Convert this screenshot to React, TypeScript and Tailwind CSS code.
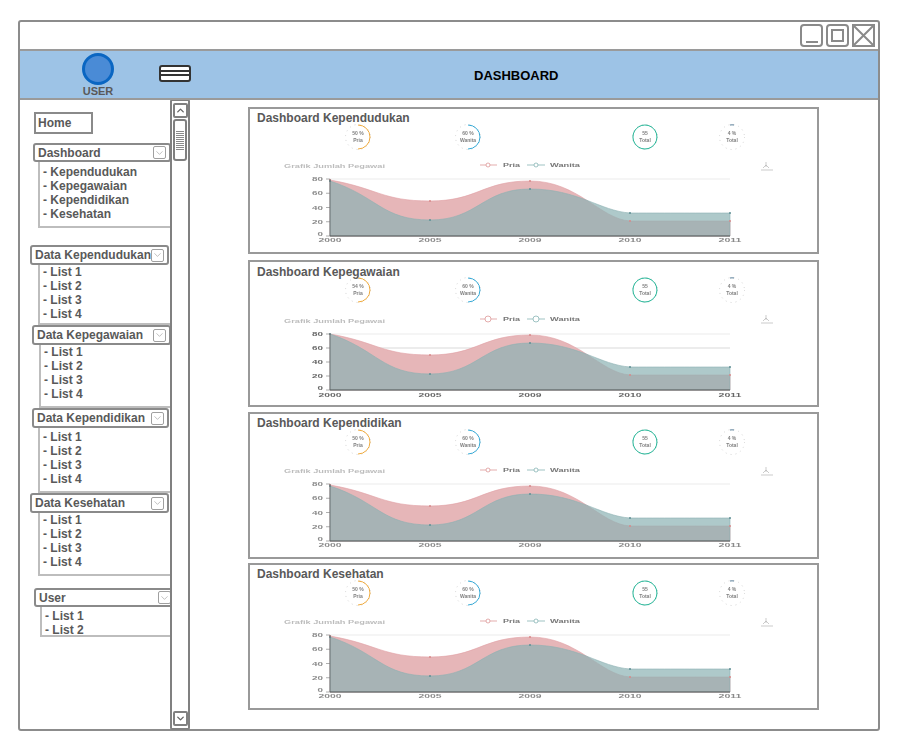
import React from 'react';
import { ChevronDown, ChevronUp } from 'lucide-react';

type Group = {
  title: string;
  items: string[];
  wrap: string;
  header: string;
  list: string;
};

const listItems = ['- List 1', '- List 2', '- List 3', '- List 4'];

const groups: Group[] = [
  {
    title: 'Dashboard',
    items: ['- Kependudukan', '- Kepegawaian', '- Kependidikan', '- Kesehatan'],
    wrap: 'mt-[9px] ml-[13px] w-[138px]',
    header: 'h-[19px]',
    list: 'ml-[5px] h-[66px] pt-[3px] pl-[3px]',
  },
  {
    title: 'Data Kependudukan',
    items: listItems,
    wrap: 'mt-[17px] ml-[10px] w-[139px]',
    header: 'h-[20px]',
    list: 'ml-[8px] -mr-[2px] h-[60px] pl-[3px]',
  },
  {
    title: 'Data Kepegawaian',
    items: listItems,
    wrap: 'ml-[12px] w-[139px]',
    header: 'h-[20px]',
    list: 'ml-[7px] h-[63px] pl-[3px]',
  },
  {
    title: 'Data Kependidikan',
    items: listItems,
    wrap: 'ml-[12px] w-[137px]',
    header: 'h-[20px]',
    list: 'ml-[6px] -mr-[2px] h-[65px] pt-[2px] pl-[3px]',
  },
  {
    title: 'Data Kesehatan',
    items: listItems,
    wrap: 'ml-[10px] w-[139px]',
    header: 'h-[20px]',
    list: 'ml-[8px] -mr-[2px] h-[63px] pl-[3px]',
  },
  {
    title: 'User',
    items: ['- List 1', '- List 2'],
    wrap: 'mt-[12px] ml-[14px] w-[142px]',
    header: 'h-[19px]',
    list: 'ml-[6px] h-[30px] pt-[2px] pl-[3px]',
  },
];

const SideGroup = ({ group }: { group: Group }) => (
  <div className={group.wrap}>
    <div
      className={`flex items-center justify-between rounded-[3px] border-2 border-[#8a8a8a] bg-white pl-[3px] pr-[3px] ${group.header}`}
    >
      <span>{group.title}</span>
      <span className="flex h-[13px] w-[13px] items-center justify-center rounded-[2px] border border-[#a0a0a0]">
        <ChevronDown size={12} strokeWidth={1} color="#777" />
      </span>
    </div>
    <div className={`border-b-2 border-l-2 border-[#bdbdbd] leading-[14px] ${group.list}`}>
      {group.items.map((item) => (
        <div key={item}>{item}</div>
      ))}
    </div>
  </div>
);

const xs = [82, 182, 282, 382, 482];

const curve = (ys: number[]) => {
  let d = `M${xs[0]} ${ys[0]}`;
  for (let i = 1; i < xs.length; i++) {
    // first segment leaves the axis on a slope, the rest flatten at the data points
    const c1y = i === 1 ? ys[0] + (ys[1] - ys[0]) * 0.4 : ys[i - 1];
    const c2x = i === 3 ? xs[i] - 30 : xs[i] - 48;
    const c2y = i === 3 ? ys[i] - 2 : ys[i];
    d += ` C${xs[i - 1] + 48} ${c1y} ${c2x} ${c2y} ${xs[i]} ${ys[i]}`;
  }
  return d;
};

const Gauge = ({
  cx,
  cy,
  color,
  arc,
  top,
  bottom,
}: {
  cx: number;
  cy: number;
  color: string;
  arc: string;
  top: string;
  bottom: string;
}) => (
  <g>
    <circle cx={cx} cy={cy} r="12.5" fill="none" stroke="#c9c9c9" strokeWidth="0.8" strokeDasharray="1 4" />
    <path d={arc} transform={`translate(${cx} ${cy})`} fill="none" stroke={color} strokeWidth="1" />
    <text x={cx} y={cy - 2} textAnchor="middle" fontSize="5" fill="#808080">
      {top}
    </text>
    <text x={cx} y={cy + 5} textAnchor="middle" fontSize="5" fill="#808080">
      {bottom}
    </text>
  </g>
);

const halfArc = 'M0 -12 A12 12 0 0 1 0 12';
const fullArc = 'M0 -12 A12 12 0 1 1 -0.1 -12';
const tinyArc = 'M-2 -12 A12 12 0 0 1 2 -12';

const Chart = ({ sharp = false }: { sharp?: boolean }) => {
  const top = sharp ? 73 : 71;
  const bottom = sharp ? 129 : 128;
  const pink = sharp ? [73, 94, 74, 114, 114] : [72, 93, 73, 113, 113];
  const teal = sharp ? [73, 113, 82, 106, 106] : [73, 112, 81, 105, 105];
  const step = (bottom - top) / 4;
  const labels = ['80', '60', '40', '20', '0'];
  const years = ['2000', '2005', '2009', '2010', '2011'];
  const small = sharp ? 6 : 4.5;
  const ink = sharp ? '#666' : '#8a8a8a';

  return (
    <svg
      viewBox="2 16 567 126"
      width="567"
      height="126"
      className="block overflow-visible blur-[0.4px]"
      fontFamily="'Liberation Sans', sans-serif"
    >
      <Gauge cx={110} cy={29} color="#efaa3d" arc={halfArc} top={sharp ? '54 %' : '50 %'} bottom="Pria" />
      <Gauge cx={220} cy={29} color="#35a9d6" arc={halfArc} top="60 %" bottom="Wanita" />
      <Gauge cx={397} cy={29} color="#1fb394" arc={fullArc} top="55" bottom="Total" />
      <Gauge cx={484} cy={29} color="#5a7f99" arc={tinyArc} top="4 %" bottom="Total" />

      <text x={36} y={sharp ? 62 : 60} fontSize={small} fill="#bdbdbd" textLength={101} lengthAdjust="spacingAndGlyphs">
        Grafik Jumlah Pegawai
      </text>

      <line x1="232" y1={sharp ? 58 : 57} x2="249" y2={sharp ? 58 : 57} stroke="#d98a8a" strokeWidth="0.7" />
      <circle cx="240" cy={sharp ? 58 : 57} r={sharp ? 3 : 2} fill="white" stroke="#d98a8a" strokeWidth="0.7" />
      <text x={255} y={sharp ? 60 : 59} fontSize={small} fill="#777" textLength={17} lengthAdjust="spacingAndGlyphs">
        Pria
      </text>
      <line x1="279" y1={sharp ? 58 : 57} x2="297" y2={sharp ? 58 : 57} stroke="#7aa" strokeWidth="0.7" />
      <circle cx="288" cy={sharp ? 58 : 57} r={sharp ? 3 : 2} fill="white" stroke="#7aa" strokeWidth="0.7" />
      <text x={302} y={sharp ? 60 : 59} fontSize={small} fill="#777" textLength={30} lengthAdjust="spacingAndGlyphs">
        Wanita
      </text>

      <path d="M515 60 l3 -3 l3 3 M518 54 v5 M513 62 h12" fill="none" stroke="#aaa" strokeWidth="0.6" />

      <line x1={82} y1={top} x2={482} y2={top} stroke="#e6e6e6" strokeWidth="0.8" />
      {sharp && <line x1={82} y1={top + step} x2={482} y2={top + step} stroke="#cfcfcf" strokeWidth="0.8" />}

      <path d={`${curve(pink)} L482 ${bottom} L82 ${bottom} Z`} fill="#e6b6b8" stroke="#e0a0a4" strokeWidth="0.6" />
      <path
        d={`${curve(teal)} L482 ${bottom} L82 ${bottom} Z`}
        fill="rgba(140,178,180,0.7)"
        stroke="#8cb0b2"
        strokeWidth="0.6"
      />
      {xs.map((x, i) => (
        <g key={x}>
          <circle cx={x} cy={pink[i]} r="1" fill="#d98a8a" />
          <circle cx={x} cy={teal[i]} r="1" fill="#5f8f94" />
        </g>
      ))}

      <line x1={82} y1={top} x2={82} y2={bottom} stroke="#666" strokeWidth="0.8" />
      <line x1={82} y1={bottom} x2={482} y2={bottom} stroke="#555" strokeWidth="1" />
      {labels.map((label, i) => (
        <g key={label}>
          <line x1={78} y1={top + step * i} x2={82} y2={top + step * i} stroke="#777" strokeWidth="0.6" />
          <text
            x={75}
            y={top + step * i + (i === 4 ? 0 : 2)}
            textAnchor="end"
            fontSize={small}
            fill={ink}
            textLength={label.length * 5.5}
            lengthAdjust="spacingAndGlyphs"
          >
            {label}
          </text>
        </g>
      ))}
      {years.map((year, i) => (
        <text
          key={year}
          x={xs[i]}
          y={bottom + (sharp ? 7 : 6)}
          textAnchor="middle"
          fontSize={small}
          fill={ink}
          textLength={23}
          lengthAdjust="spacingAndGlyphs"
        >
          {year}
        </text>
      ))}
    </svg>
  );
};

const DashCard = ({ title, className, sharp }: { title: string; className: string; sharp?: boolean }) => (
  <div className={`h-[147px] w-[571px] border-2 border-[#999999] ${className}`}>
    <div className={`h-[15px] pl-[7px] text-[12px] leading-[14px] ${sharp ? 'pt-[3px]' : 'pt-[2px]'}`}>{title}</div>
    <Chart sharp={sharp} />
  </div>
);

export default function App() {
  return (
    <div className="h-[750px] w-[899px] overflow-hidden bg-white pl-[18px] pt-[20px] font-['Liberation_Sans',sans-serif] text-[12px] font-bold text-[#595959]">
      <div className="flex h-[711px] w-[862px] flex-col rounded-[3px] border-2 border-[#8c8c8c]">
        <div className="flex h-[27px] items-start justify-end gap-[3px] pr-[3px] pt-[2px]">
          <div className="flex h-[23px] w-[23px] items-end justify-center rounded-[4px] border-2 border-[#8a8a8a] pb-[2px]">
            <div className="h-[2px] w-[12px] bg-[#8a8a8a]" />
          </div>
          <div className="flex h-[23px] w-[23px] items-center justify-center rounded-[4px] border-2 border-[#8a8a8a]">
            <div className="h-[13px] w-[13px] border-2 border-[#8a8a8a]" />
          </div>
          <div className="h-[23px] w-[23px] border-2 border-[#8a8a8a]">
            <svg viewBox="0 0 19 19" width="19" height="19" className="block">
              <path d="M0 0 L19 19 M19 0 L0 19" stroke="#8a8a8a" strokeWidth="2" />
            </svg>
          </div>
        </div>

        <div className="relative flex h-[51px] items-center border-y-2 border-[#9a9a9a] bg-[#9dc3e6]">
          <div className="ml-[60px] flex w-[36px] flex-col items-center">
            <div className="h-[32px] w-[32px] rounded-full border-[3px] border-[#0a66c2] bg-[#4a8bd6]" />
            <div className="text-[11px] leading-[12px]">USER</div>
          </div>
          <div className="ml-[43px] -mt-[3px] flex h-[17px] w-[32px] flex-col justify-center gap-[2px] rounded-[3px] border-2 border-[#333333] bg-white">
            <div className="h-[2px] bg-[#333333]" />
            <div className="h-[2px] bg-[#333333]" />
          </div>
          <div className="absolute left-[454px] top-[17px] text-[13px] leading-[15px] text-black">DASHBOARD</div>
        </div>

        <div className="flex min-h-0 flex-1">
          <div className="w-[150px] overflow-hidden pt-[12px]">
            <div className="ml-[14px] flex h-[22px] w-[59px] items-center border-2 border-[#8a8a8a] pl-[2px]">Home</div>
            {groups.map((group) => (
              <SideGroup key={group.title} group={group} />
            ))}
          </div>

          <div className="-mt-[1px] flex h-[631px] w-[20px] flex-col items-center justify-between rounded-[2px] border-2 border-[#808080] bg-white pb-[2px] pt-[2px]">
            <div className="flex flex-col items-center gap-[1px]">
              <div className="flex h-[15px] w-[15px] items-center justify-center rounded-[2px] border-2 border-[#808080]">
                <ChevronUp size={13} strokeWidth={3} color="#666" />
              </div>
              <div className="flex h-[42px] w-[14px] flex-col items-center justify-center gap-[1px] rounded-[3px] border-2 border-[#808080]">
                {[0, 1, 2, 3, 4, 5, 6, 7, 8, 9].map((n) => (
                  <div key={n} className="h-[1px] w-[8px] bg-[#8a8a8a]" />
                ))}
              </div>
            </div>
            <div className="flex h-[15px] w-[15px] items-center justify-center rounded-[2px] border-2 border-[#808080]">
              <ChevronDown size={13} strokeWidth={3} color="#666" />
            </div>
          </div>

          <div className="pl-[58px] pt-[7px]">
            <DashCard title="Dashboard Kependudukan" className="" />
            <DashCard title="Dashboard Kepegawaian" className="mt-[6px]" sharp />
            <DashCard title="Dashboard Kependidikan" className="mt-[5px]" />
            <DashCard title="Dashboard Kesehatan" className="mt-[4px]" />
          </div>
        </div>
      </div>
    </div>
  );
}
